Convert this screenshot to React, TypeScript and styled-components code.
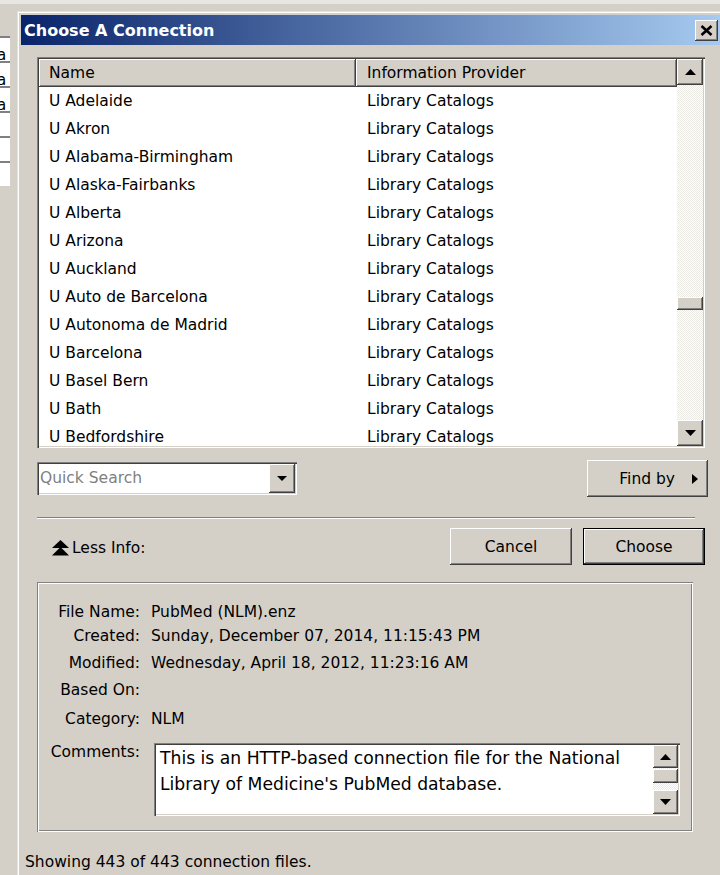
import React from "react";
import styled, { createGlobalStyle, css } from "styled-components";

const FACE = "#d4d0c8";
const LIGHT = "#ffffff";
const SHADOW = "#808080";
const DARK = "#404040";

const GlobalStyle = createGlobalStyle`
    html, body {
        margin: 0;
        padding: 0;
    }
    body {
        background: ${FACE};
        font-family: "DejaVu Sans", "Liberation Sans", sans-serif;
        font-size: 15.5px;
        color: #000;
    }
    * {
        box-sizing: border-box;
    }
`;

const raised = css`
    background: ${FACE};
    box-shadow: inset -1px -1px 0 ${DARK}, inset 1px 1px 0 ${LIGHT}, inset -2px -2px 0 ${SHADOW};
`;

const sunken = css`
    box-shadow: inset 1px 1px 0 ${SHADOW}, inset 2px 2px 0 ${DARK}, inset -1px -1px 0 ${LIGHT},
        inset -2px -2px 0 ${FACE};
`;

const groove = css`
    box-shadow: inset 1px 1px 0 ${SHADOW}, inset 2px 2px 0 ${LIGHT}, inset -1px -1px 0 ${LIGHT},
        inset -2px -2px 0 ${SHADOW};
`;

const checker = css`
    background-color: ${FACE};
    background-image: conic-gradient(${LIGHT} 25%, #ebe9e4 0 50%, ${LIGHT} 0 75%, #ebe9e4 0);
    background-size: 2px 2px;
`;

const CONNECTIONS = [
    "U Adelaide",
    "U Akron",
    "U Alabama-Birmingham",
    "U Alaska-Fairbanks",
    "U Alberta",
    "U Arizona",
    "U Auckland",
    "U Auto de Barcelona",
    "U Autonoma de Madrid",
    "U Barcelona",
    "U Basel Bern",
    "U Bath",
    "U Bedfordshire",
];

const COLUMNS = [
    { title: "Name", width: 317, indent: 10 },
    { title: "Information Provider", indent: 11 },
];

const DETAILS = [
    { label: "File Name:", value: "PubMed (NLM).enz" },
    { label: "Created:", value: "Sunday, December 07, 2014, 11:15:43 PM" },
    { label: "Modified:", value: "Wednesday, April 18, 2012, 11:23:16 AM" },
    { label: "Based On:", value: "" },
    { label: "Category:", value: "NLM" },
];

// rows of the window sitting behind the dialog, only the left sliver shows
const BEHIND_ROWS = ["a", "a", "a", "", "", ""];

const TOTAL_FILES = 443;
const LIST_TRACK = 335;
const LIST_THUMB_AT = 212;

const Desktop = styled.div`
    display: flex;
    width: 720px;
    height: 875px;
    overflow: hidden;
    background: linear-gradient(#e8e6e1 0 4px, ${FACE} 4px);
`;

const BehindWindow = styled.div`
    flex: 0 0 17px;
    padding-top: 36px;
`;

const BehindPane = styled.div`
    width: 10px;
    background: ${LIGHT};
    overflow: hidden;
`;

const BehindItem = styled.div`
    height: 25px;
    border-top: 2px solid ${SHADOW};
    font-size: 15px;
    line-height: 34px;
    text-indent: -3px;
    white-space: nowrap;
`;

const Dialog = styled.div`
    flex: 1;
    margin: 11px -4px 0 0;
    padding: 4px;
    display: flex;
    flex-direction: column;
    background: ${FACE};
    box-shadow: inset 1px 1px 0 #e4e1dc, inset 2px 2px 0 ${LIGHT};
`;

const TitleBar = styled.div`
    height: 30px;
    flex: none;
    display: flex;
    align-items: center;
    justify-content: space-between;
    padding: 0 2px 0 3px;
    background: linear-gradient(to right, #0a246a, #a6caf0);
`;

const Title = styled.span`
    color: ${LIGHT};
    font-weight: bold;
    font-size: 16px;
`;

const CloseButton = styled.div`
    width: 23px;
    height: 21px;
    display: flex;
    align-items: center;
    justify-content: center;
    ${raised};
`;

const Body = styled.div`
    padding: 12px 15px 0 16px;
    display: flex;
    flex-direction: column;
`;

const ListBox = styled.div`
    height: 391px;
    padding: 2px;
    display: flex;
    background: ${LIGHT};
    ${sunken};
`;

const ListMain = styled.div`
    flex: 1;
    display: flex;
    flex-direction: column;
    overflow: hidden;
`;

const HeaderRow = styled.div`
    flex: none;
    display: flex;
    height: 28px;
`;

const HeaderCell = styled.div<{ $width?: number; $indent: number }>`
    flex: ${(p) => (p.$width ? `0 0 ${p.$width}px` : "1")};
    padding-left: ${(p) => p.$indent}px;
    line-height: 28px;
    white-space: nowrap;
    ${raised};
`;

const Row = styled.div`
    flex: none;
    display: flex;
    height: 28px;
    line-height: 28px;
`;

const Cell = styled.div<{ $width?: number; $indent: number }>`
    flex: ${(p) => (p.$width ? `0 0 ${p.$width}px` : "1")};
    padding-left: ${(p) => p.$indent}px;
    white-space: nowrap;
`;

const ScrollBar = styled.div<{ $width: number }>`
    flex: 0 0 ${(p) => p.$width}px;
    display: flex;
    flex-direction: column;
`;

const ScrollButton = styled.div<{ $height: number }>`
    flex: 0 0 ${(p) => p.$height}px;
    display: flex;
    align-items: center;
    justify-content: center;
    ${raised};
`;

const ScrollTrack = styled.div`
    flex: 1;
    display: flex;
    flex-direction: column;
    ${checker};
`;

const Thumb = styled.div<{ $offset: number; $height: number }>`
    flex: 0 0 ${(p) => p.$height}px;
    margin-top: ${(p) => p.$offset}px;
    ${raised};
`;

const SearchRow = styled.div`
    display: flex;
    align-items: flex-start;
    justify-content: space-between;
    margin: 12px -3px 0 0;
`;

const Combo = styled.div`
    margin-top: 2px;
    width: 260px;
    height: 33px;
    padding: 2px;
    display: flex;
    background: ${LIGHT};
    ${sunken};
`;

const ComboText = styled.div`
    flex: 1;
    padding-left: 1px;
    line-height: 29px;
    color: ${SHADOW};
`;

const ComboButton = styled.div`
    flex: 0 0 26px;
    display: flex;
    align-items: center;
    justify-content: center;
    ${raised};
`;

const FindBy = styled.div`
    width: 121px;
    height: 37px;
    display: flex;
    align-items: center;
    justify-content: flex-end;
    gap: 17px;
    padding-right: 10px;
    ${raised};
`;

const Separator = styled.div`
    margin: 20px 10px 0 0;
    border-top: 1px solid ${SHADOW};
    border-bottom: 1px solid ${LIGHT};
`;

const ActionRow = styled.div`
    display: flex;
    align-items: center;
    margin-top: 9px;
`;

const LessInfo = styled.div`
    flex: 1;
    display: flex;
    align-items: center;
    gap: 3px;
    padding: 2px 0 0 15px;
`;

const ButtonGroup = styled.div`
    display: flex;
    gap: 11px;
`;

const PushButton = styled.div<{ $default?: boolean }>`
    width: 122px;
    height: 37px;
    display: flex;
    align-items: center;
    justify-content: center;
    ${raised};
    ${(p) =>
        p.$default &&
        css`
            box-shadow: inset 0 0 0 1px #000, inset -2px -2px 0 ${DARK}, inset 2px 2px 0 ${LIGHT},
                inset -3px -3px 0 ${SHADOW};
        `}
`;

const InfoPanel = styled.div`
    margin: 17px 12px 0 0;
    padding: 18px 13px 16px 2px;
    display: grid;
    grid-template-columns: 101px 1fr;
    grid-template-rows: 24px 24px 30px 24px 34px auto;
    column-gap: 11px;
    ${groove};
`;

const Label = styled.div<{ $top?: boolean }>`
    text-align: right;
    line-height: 24px;
    align-self: ${(p) => (p.$top ? "start" : "center")};
    padding-top: ${(p) => (p.$top ? 4 : 0)}px;
    white-space: nowrap;
`;

const Value = styled.div`
    line-height: 24px;
    align-self: center;
    white-space: nowrap;
`;

const CommentBox = styled.div`
    margin: 7px 0 0 3px;
    height: 73px;
    padding: 2px;
    display: flex;
    background: ${LIGHT};
    ${sunken};
`;

const CommentText = styled.div`
    flex: 1;
    padding-left: 4px;
    font-size: 17.2px;
    line-height: 26px;
    white-space: nowrap;
    overflow: hidden;
`;

const StatusBar = styled.div`
    padding: 18px 0 0 4px;
    line-height: 24px;
`;

type Dir = "up" | "down" | "right";

const Arrow = ({ dir, w, h }: { dir: Dir; w: number; h: number }) => {
    const points =
        dir === "up"
            ? `${w / 2},0 ${w},${h} 0,${h}`
            : dir === "down"
            ? `0,0 ${w},0 ${w / 2},${h}`
            : `0,0 ${w},${h / 2} 0,${h}`;
    return (
        <svg width={w} height={h} viewBox={`0 0 ${w} ${h}`}>
            <polygon points={points} fill='#000' />
        </svg>
    );
};

const CloseGlyph = () => (
    <svg width='13' height='11' viewBox='0 0 13 11'>
        <path d='M1.5 1 L11.5 10 M11.5 1 L1.5 10' stroke='#000' strokeWidth='2.6' />
    </svg>
);

const CollapseGlyph = () => (
    <svg width='17' height='16' viewBox='0 0 17 16'>
        <polygon points='8.5,0 17,8 0,8' fill='#000' />
        <polygon points='8.5,7 17,15.5 0,15.5' fill='#000' />
    </svg>
);

const ConnectionList = () => (
    <ListBox>
        <ListMain>
            <HeaderRow>
                {COLUMNS.map((c) => (
                    <HeaderCell key={c.title} $width={c.width} $indent={c.indent}>
                        {c.title}
                    </HeaderCell>
                ))}
            </HeaderRow>
            {CONNECTIONS.map((name) => (
                <Row key={name}>
                    <Cell $width={COLUMNS[0].width} $indent={COLUMNS[0].indent}>
                        {name}
                    </Cell>
                    <Cell $indent={COLUMNS[1].indent}>Library Catalogs</Cell>
                </Row>
            ))}
        </ListMain>
        <ScrollBar $width={26}>
            <ScrollButton $height={26}>
                <Arrow dir='up' w={11} h={6} />
            </ScrollButton>
            <ScrollTrack>
                <Thumb $offset={Math.round((LIST_THUMB_AT / LIST_TRACK) * LIST_TRACK)} $height={13} />
            </ScrollTrack>
            <ScrollButton $height={26}>
                <Arrow dir='down' w={11} h={6} />
            </ScrollButton>
        </ScrollBar>
    </ListBox>
);

const Details = () => (
    <InfoPanel>
        {DETAILS.map((d) => (
            <React.Fragment key={d.label}>
                <Label>{d.label}</Label>
                <Value>{d.value}</Value>
            </React.Fragment>
        ))}
        <Label $top>Comments:</Label>
        <CommentBox>
            <CommentText>
                This is an HTTP-based connection file for the National
                <br />
                Library of Medicine's PubMed database.
            </CommentText>
            <ScrollBar $width={25}>
                <ScrollButton $height={23}>
                    <Arrow dir='up' w={11} h={6} />
                </ScrollButton>
                <ScrollTrack>
                    <Thumb $offset={1} $height={14} />
                </ScrollTrack>
                <ScrollButton $height={24}>
                    <Arrow dir='down' w={11} h={6} />
                </ScrollButton>
            </ScrollBar>
        </CommentBox>
    </InfoPanel>
);

const App: React.FC = () => {
    return (
        <>
            <GlobalStyle />
            <Desktop>
                <BehindWindow>
                    <BehindPane>
                        {BEHIND_ROWS.map((t, i) => (
                            <BehindItem key={i}>{t}</BehindItem>
                        ))}
                    </BehindPane>
                </BehindWindow>
                <Dialog>
                    <TitleBar>
                        <Title>Choose A Connection</Title>
                        <CloseButton>
                            <CloseGlyph />
                        </CloseButton>
                    </TitleBar>
                    <Body>
                        <ConnectionList />
                        <SearchRow>
                            <Combo>
                                <ComboText>Quick Search</ComboText>
                                <ComboButton>
                                    <Arrow dir='down' w={10} h={5} />
                                </ComboButton>
                            </Combo>
                            <FindBy>
                                <span>Find by</span>
                                <Arrow dir='right' w={6} h={10} />
                            </FindBy>
                        </SearchRow>
                        <Separator />
                        <ActionRow>
                            <LessInfo>
                                <CollapseGlyph />
                                <span>Less Info:</span>
                            </LessInfo>
                            <ButtonGroup>
                                <PushButton>Cancel</PushButton>
                                <PushButton $default>Choose</PushButton>
                            </ButtonGroup>
                        </ActionRow>
                        <Details />
                    </Body>
                    <StatusBar>
                        Showing {TOTAL_FILES} of {TOTAL_FILES} connection files.
                    </StatusBar>
                </Dialog>
            </Desktop>
        </>
    );
};

export default App;
